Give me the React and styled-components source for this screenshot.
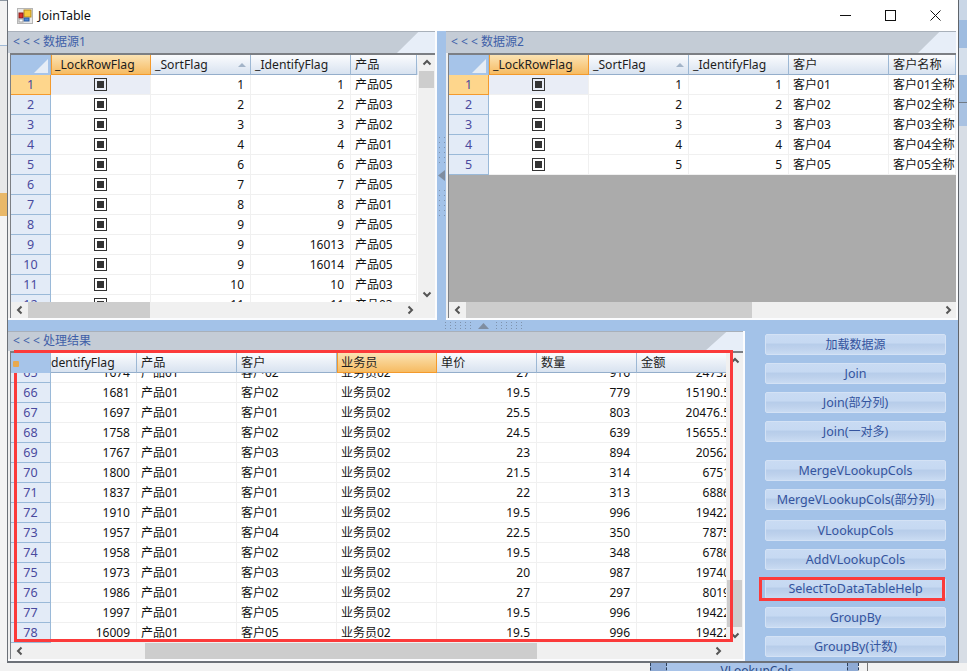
import React from 'react'
import styled, { createGlobalStyle, css } from 'styled-components'

const FONT = `"Noto Sans", "Noto Sans CJK SC", sans-serif`

const left = [
  [1, 1, '产品05'], [2, 2, '产品03'], [3, 3, '产品02'], [4, 4, '产品01'],
  [6, 6, '产品03'], [7, 7, '产品05'], [8, 8, '产品01'], [9, 9, '产品05'],
  [9, 16013, '产品05'], [9, 16014, '产品05'], [10, 10, '产品03'], [11, 11, '产品03'],
]

const right = [1, 2, 3, 4, 5]

const result = [
  [65, 1674, '客户02', 27, 916, '24732'],
  [66, 1681, '客户02', 19.5, 779, '15190.5'],
  [67, 1697, '客户01', 25.5, 803, '20476.5'],
  [68, 1758, '客户02', 24.5, 639, '15655.5'],
  [69, 1767, '客户03', 23, 894, '20562'],
  [70, 1800, '客户01', 21.5, 314, '6751'],
  [71, 1837, '客户01', 22, 313, '6886'],
  [72, 1910, '客户01', 19.5, 996, '19422'],
  [73, 1957, '客户04', 22.5, 350, '7875'],
  [74, 1958, '客户02', 19.5, 348, '6786'],
  [75, 1973, '客户03', 20, 987, '19740'],
  [76, 1986, '客户02', 27, 297, '8019'],
  [77, 1997, '客户05', 19.5, 996, '19422'],
  [78, 16009, '客户05', 19.5, 996, '19422'],
]

const GlobalStyle = createGlobalStyle`
  html, body { margin: 0; padding: 0; background: #f2f2f2; }
  * { box-sizing: border-box; }
`

const Page = styled.div`
  position: relative;
  width: 967px;
  height: 671px;
  overflow: hidden;
  font-family: ${FONT};
  font-size: 12px;
  display: flex;
  flex-direction: column;
`

const TopArea = styled.div`
  display: flex;
  height: 663px;
`

const LeftEdge = styled.div`
  width: 7px;
  background: linear-gradient(#8e98a3 0 1px, #f2f2f2 1px 45px, #9fb9d6 45px 46px, #e8e8e8 46px 193px, #e9b868 193px 216px, #f4f4f4 216px);
`

const RightEdge = styled.div`
  flex: 1;
  background: linear-gradient(#c9d6e6 0 20px, #9fbce0 20px 48px, #d5dfeb 48px 75px, #9fbce0 75px 102px, #6f7a86 102px 103px, #a9c2e2 103px 126px, #d7dde5 126px);
`

const BottomEdge = styled.div`
  flex: 1;
  display: flex;
  background: #f2f2f2;
  padding-left: 650px;
`

const DashCell = styled.div`
  width: ${p => p.$w}px;
  height: 100%;
  background: ${p => p.$bg};
  border-left: 1px dashed #2c3e58;
  overflow: hidden;
  font-size: 12px;
  color: #2a4a86;
  text-align: center;
  line-height: 16px;
`

const EdgeLine = styled.div`
  width: 10px;
  height: 100%;
  border-left: 1px dashed #2c3e58;
  border-right: 1px solid #777;
`

const Window = styled.div`
  width: 952px;
  display: flex;
  flex-direction: column;
  border-left: 1px solid #6c7178;
  border-right: 1px solid #5f646b;
  border-bottom: 2px solid #6c7178;
  background: #a3c2e8;
`

const TitleBar = styled.div`
  height: 31px;
  flex: none;
  background: #fff;
  display: flex;
  align-items: center;
  padding-left: 9px;
  color: #111;
  font-size: 12.5px;
`

const TitleText = styled.span`
  margin-left: 5px;
  flex: 1;
`

const CaptionButton = styled.div`
  width: 45px;
  height: 31px;
  display: flex;
  align-items: center;
  justify-content: center;
`

const TopRow = styled.div`
  display: flex;
  height: 289px;
  flex: none;
`

const BottomRow = styled.div`
  display: flex;
  flex: 1;
  min-height: 0;
`

const Panel = styled.div`
  width: ${p => p.$w}px;
  flex: none;
  display: flex;
  flex-direction: column;
  background: #f0f0f0;
  border-right: 2px solid #fbfcfe;
  border-bottom: 2px solid #fbfcfe;
`

const PanelHeader = styled.div`
  position: relative;
  height: ${p => p.$h}px;
  flex: none;
  background: #c4ccd6;
  border-top: 1px solid #a8b0ba;
  color: #3f5fa8;
  font-size: 12px;
  line-height: ${p => p.$h - 2}px;
  padding-left: 5px;
  &::after {
    content: '';
    position: absolute;
    right: 0;
    top: 0;
    bottom: 0;
    width: 38px;
    background: #e7eef8;
    clip-path: polygon(56% 0, 100% 0, 100% 100%, 0 100%);
  }
`

const VSplit = styled.div`
  width: 9px;
  flex: none;
  display: flex;
  flex-direction: column;
  align-items: center;
  justify-content: center;
  gap: 7px;
`

const HSplit = styled.div`
  height: 11px;
  flex: none;
  display: flex;
  align-items: center;
  justify-content: center;
  gap: 5px;
`

const Dots = styled.div`
  ${p => p.$vertical ? css`
    width: 10px;
    height: 28px;
    background-size: 5px 5px;
  ` : css`
    width: 30px;
    height: 9px;
    background-size: 5px 3px;
  `}
  background-image: radial-gradient(#7f93ad 0.8px, transparent 1px);
`

const GridFrame = styled.div`
  flex: 1;
  min-height: 0;
  margin-left: 2px;
  display: flex;
  flex-direction: column;
  border-top: 2px solid #7c7f84;
  border-left: 1px solid #7c7f84;
  background: #f0f0f0;
  position: relative;
`

const GridMain = styled.div`
  flex: 1;
  min-height: 0;
  display: flex;
`

const RowsPane = styled.div`
  flex: 1;
  min-width: 0;
  overflow: hidden;
  background: ${p => p.$empty ? '#ababab' : '#fff'};
  position: relative;
`

const Scroller = styled.div`
  margin-top: ${p => p.$offset || 0}px;
`

const Row = styled.div`
  display: flex;
  height: 20px;
  ${p => p.$head && css`
    position: relative;
    z-index: 1;
    background: linear-gradient(#fbfcfe, #d6e1ef);
  `}
`

const Corner = styled.div`
  position: relative;
  width: 40px;
  flex: none;
  background: #a6c4e9;
  border-right: 1px solid #9ab9d8;
  ${p => p.$triangle && css`
    &::after {
      content: '';
      position: absolute;
      right: 2px;
      bottom: 2px;
      width: 14px;
      height: 14px;
      background: #e6edf6;
      clip-path: polygon(100% 0, 100% 100%, 0 100%);
    }
  `}
`

const Marker = styled.div`
  position: absolute;
  left: 2px;
  top: 8px;
  width: 6px;
  height: 6px;
  background: #e9a94e;
  border-radius: 1px;
`

const HeadCell = styled.div`
  position: relative;
  flex: none;
  width: ${p => p.$w}px;
  padding-left: ${p => p.$cut ? 0 : 4}px;
  font-size: 12.2px;
  line-height: 19px;
  white-space: nowrap;
  overflow: hidden;
  color: #1d1d1d;
  border-right: 1px solid #9db8d4;
  border-bottom: 1px solid #94aecb;
  ${p => p.$active && css`
    background: linear-gradient(#fbe3b4, #f6bb62);
    border-bottom: 1px solid #f49a2c;
    border-right: 1px solid #f49a2c;
    box-shadow: inset 1px 0 #f49a2c;
  `}
`

const SortGlyph = styled.span`
  position: absolute;
  right: 4px;
  top: 8px;
  width: 0;
  height: 0;
  border-left: 4px solid transparent;
  border-right: 4px solid transparent;
  border-bottom: 4px solid #a3b4c8;
`

const RowHead = styled.div`
  width: 40px;
  flex: none;
  text-align: center;
  font-size: 12.5px;
  line-height: 19px;
  color: #4a4a9e;
  background: ${p => p.$active ? '#fed68c' : '#e3ebf7'};
  border-right: 1px solid ${p => p.$active ? '#f49a2c' : '#9ab9d8'};
  border-bottom: 1px solid ${p => p.$active ? '#f49a2c' : '#9ab9d8'};
`

const Cell = styled.div`
  flex: none;
  width: ${p => p.$w}px;
  padding: ${p => p.$align === 'right' ? '0 6px 0 4px' : '0 4px'};
  line-height: 19px;
  white-space: nowrap;
  overflow: hidden;
  color: #111;
  text-align: ${p => p.$align || 'left'};
  background: ${p => p.$current ? '#e9edf6' : '#fff'};
  border-right: 1px solid #f0f0f0;
  border-bottom: 1px solid #f0f0f0;
`

const CheckCell = styled(Cell)`
  display: flex;
  align-items: center;
  justify-content: center;
`

const Check = styled.span`
  width: 13px;
  height: 13px;
  border: 1.5px solid #333;
  padding: 2px;
  &::before {
    content: '';
    display: block;
    width: 100%;
    height: 100%;
    background: #333;
  }
`

const VBar = styled.div`
  width: 17px;
  flex: none;
  background: #f0f0f0;
  display: flex;
  flex-direction: column;
  align-items: center;
`

const VThumb = styled.div`
  width: 15px;
  flex: none;
  height: ${p => p.$h}px;
  background: #cdcdcd;
`

const Spacer = styled.div`
  flex: 1;
`

const HBar = styled.div`
  height: 16px;
  flex: none;
  background: #f0f0f0;
  display: flex;
  align-items: stretch;
`

const HThumb = styled.div`
  flex: none;
  width: ${p => p.$w}px;
  margin-left: ${p => p.$left || 0}px;
  background: #cdcdcd;
`

const ArrowBox = styled.div`
  flex: none;
  width: 17px;
  min-height: 16px;
  display: flex;
  align-items: center;
  justify-content: center;
`

const ButtonColumn = styled.div`
  flex: 1;
  display: flex;
  flex-direction: column;
  gap: 8px;
  padding: 3px 0 0 20px;
`

const ActionButton = styled.button`
  width: 181px;
  height: 21px;
  flex: none;
  margin-top: ${p => p.$above || 0}px;
  padding: 0;
  border: 1px solid #d4e2f5;
  border-radius: 2px;
  font-family: ${FONT};
  font-size: 12.5px;
  line-height: 17px;
  color: #34549e;
  background: linear-gradient(#c9dbf3 0, #c6d9f2 40%, #b7cdea 50%, #bdd1ec 70%, #c9dbf2 100%);
`

const Cjk = styled.span`
  font-size: 12px;
`

const RedBox = styled.div`
  position: absolute;
  left: ${p => p.$x}px;
  top: ${p => p.$y}px;
  width: ${p => p.$w}px;
  height: ${p => p.$h}px;
  border: 3px solid #fb3a3a;
  pointer-events: none;
`

const AppIcon = () => (
  <svg width="16" height="16" viewBox="0 0 16 16">
    <rect x="0.5" y="0.5" width="15" height="15" fill="#e8e8e8" stroke="#b5b5b5" />
    <rect x="7" y="2" width="7" height="7" fill="#f6c93a" stroke="#b58a1c" />
    <rect x="2" y="5" width="4" height="5" fill="#d9312b" stroke="#8a1a16" />
    <rect x="7" y="10" width="5" height="3" fill="#4a86d8" stroke="#2c5a9c" />
    <rect x="2" y="11" width="4" height="3" fill="#fff" stroke="#a0a0a0" />
  </svg>
)

const Chevron = ({ dir, size = 10 }) => {
  const points = {
    left: '6.5,1.5 3,5 6.5,8.5',
    right: '3.5,1.5 7,5 3.5,8.5',
    up: '1.5,6.5 5,3 8.5,6.5',
    down: '1.5,3.5 5,7 8.5,3.5',
  }
  return (
    <svg width={size} height={size} viewBox="0 0 10 10">
      <polyline points={points[dir]} fill="none" stroke="#555" strokeWidth="2" />
    </svg>
  )
}

const Triangle = ({ dir }) => (
  <svg width={dir === 'left' ? 7 : 11} height={dir === 'left' ? 11 : 6} viewBox={dir === 'left' ? '0 0 7 11' : '0 0 11 6'}>
    <polygon points={dir === 'left' ? '7,0 7,11 0,5.5' : '5.5,0 11,6 0,6'} fill="#7f8da0" />
  </svg>
)

const HScroll = ({ left: thumbLeft, width, rightGap }) => (
  <HBar>
    <ArrowBox><Chevron dir="left" /></ArrowBox>
    <HThumb $left={thumbLeft} $w={width} />
    <Spacer />
    <ArrowBox><Chevron dir="right" /></ArrowBox>
    {rightGap && <ArrowBox />}
  </HBar>
)

function App() {
  return (
    <Page>
      <GlobalStyle />
      <TopArea>
        <LeftEdge />
        <Window>
          <TitleBar>
            <AppIcon />
            <TitleText>JoinTable</TitleText>
            <CaptionButton>
              <svg width="11" height="11" viewBox="0 0 11 11"><path d="M0 5.5H11" stroke="#111" /></svg>
            </CaptionButton>
            <CaptionButton>
              <svg width="11" height="11" viewBox="0 0 11 11"><rect x="0.5" y="0.5" width="10" height="10" fill="none" stroke="#111" /></svg>
            </CaptionButton>
            <CaptionButton>
              <svg width="11" height="11" viewBox="0 0 11 11"><path d="M0.5 0.5L10.5 10.5M10.5 0.5L0.5 10.5" stroke="#111" /></svg>
            </CaptionButton>
          </TitleBar>

          <TopRow>
            <Panel $w={429}>
              <PanelHeader $h={22}>&lt; &lt; &lt; 数据源1</PanelHeader>
              <GridFrame>
                <GridMain>
                  <RowsPane>
                    <Row $head>
                      <Corner $triangle />
                      <HeadCell $w={100} $active>_LockRowFlag</HeadCell>
                      <HeadCell $w={100}>_SortFlag<SortGlyph /></HeadCell>
                      <HeadCell $w={100}>_IdentifyFlag</HeadCell>
                      <HeadCell $w={66}>产品</HeadCell>
                    </Row>
                    <Scroller>
                      {left.map((r, i) => (
                        <Row key={i}>
                          <RowHead $active={i === 0}>{i + 1}</RowHead>
                          <CheckCell $w={100} $current={i === 0}><Check /></CheckCell>
                          <Cell $w={100} $align="right">{r[0]}</Cell>
                          <Cell $w={100} $align="right">{r[1]}</Cell>
                          <Cell $w={66}>{r[2]}</Cell>
                        </Row>
                      ))}
                    </Scroller>
                  </RowsPane>
                  <VBar>
                    <ArrowBox><Chevron dir="up" /></ArrowBox>
                    <VThumb $h={17} />
                    <Spacer />
                    <ArrowBox><Chevron dir="down" /></ArrowBox>
                  </VBar>
                </GridMain>
                <HScroll width={122} rightGap />
              </GridFrame>
            </Panel>

            <VSplit>
              <Dots $vertical />
              <Triangle dir="left" />
              <Dots $vertical />
            </VSplit>

            <Panel $w={512}>
              <PanelHeader $h={22}>&lt; &lt; &lt; 数据源2</PanelHeader>
              <GridFrame>
                <GridMain>
                  <RowsPane $empty>
                    <Row $head>
                      <Corner $triangle />
                      <HeadCell $w={100} $active>_LockRowFlag</HeadCell>
                      <HeadCell $w={100}>_SortFlag<SortGlyph /></HeadCell>
                      <HeadCell $w={100}>_IdentifyFlag</HeadCell>
                      <HeadCell $w={100}>客户</HeadCell>
                      <HeadCell $w={67}>客户名称</HeadCell>
                    </Row>
                    {right.map((n, i) => (
                      <Row key={n}>
                        <RowHead $active={i === 0}>{n}</RowHead>
                        <CheckCell $w={100} $current={i === 0}><Check /></CheckCell>
                        <Cell $w={100} $align="right">{n}</Cell>
                        <Cell $w={100} $align="right">{n}</Cell>
                        <Cell $w={100}>客户0{n}</Cell>
                        <Cell $w={67}>客户0{n}全称</Cell>
                      </Row>
                    ))}
                  </RowsPane>
                </GridMain>
                <HScroll width={286} />
              </GridFrame>
            </Panel>
          </TopRow>

          <HSplit>
            <Dots />
            <Triangle dir="up" />
            <Dots />
          </HSplit>

          <BottomRow>
            <Panel $w={737}>
              <PanelHeader $h={20}>&lt; &lt; &lt; 处理结果</PanelHeader>
              <GridFrame>
                <GridMain>
                  <RowsPane>
                    <Row $head>
                      <Corner><Marker /></Corner>
                      <HeadCell $w={86} $cut>dentifyFlag</HeadCell>
                      <HeadCell $w={100}>产品</HeadCell>
                      <HeadCell $w={100}>客户</HeadCell>
                      <HeadCell $w={100} $active>业务员</HeadCell>
                      <HeadCell $w={100}>单价</HeadCell>
                      <HeadCell $w={100}>数量</HeadCell>
                      <HeadCell $w={100}>金额</HeadCell>
                    </Row>
                    <Scroller $offset={-10}>
                      {result.map(r => (
                        <Row key={r[0]}>
                          <RowHead>{r[0]}</RowHead>
                          <Cell $w={86} $align="right">{r[1]}</Cell>
                          <Cell $w={100}>产品01</Cell>
                          <Cell $w={100}>{r[2]}</Cell>
                          <Cell $w={100}>业务员02</Cell>
                          <Cell $w={100} $align="right">{r[3]}</Cell>
                          <Cell $w={100} $align="right">{r[4]}</Cell>
                          <Cell $w={100} $align="right">{r[5]}</Cell>
                        </Row>
                      ))}
                    </Scroller>
                  </RowsPane>
                  <VBar>
                    <ArrowBox><Chevron dir="up" /></ArrowBox>
                    <Spacer />
                    <VThumb $h={47} />
                    <ArrowBox><Chevron dir="down" /></ArrowBox>
                  </VBar>
                </GridMain>
                <HScroll left={117} width={392} rightGap />
              </GridFrame>
            </Panel>

            <ButtonColumn>
              <ActionButton><Cjk>加载数据源</Cjk></ActionButton>
              <ActionButton>Join</ActionButton>
              <ActionButton>Join(<Cjk>部分列</Cjk>)</ActionButton>
              <ActionButton>Join(<Cjk>一对多</Cjk>)</ActionButton>
              <ActionButton $above={10}>MergeVLookupCols</ActionButton>
              <ActionButton>MergeVLookupCols(<Cjk>部分列</Cjk>)</ActionButton>
              <ActionButton $above={2}>VLookupCols</ActionButton>
              <ActionButton>AddVLookupCols</ActionButton>
              <ActionButton>SelectToDataTableHelp</ActionButton>
              <ActionButton>GroupBy</ActionButton>
              <ActionButton>GroupBy(<Cjk>计数</Cjk>)</ActionButton>
            </ButtonColumn>
          </BottomRow>
        </Window>
        <RightEdge />
      </TopArea>
      <BottomEdge>
        <DashCell $w={16} $bg="#8eaad4" />
        <DashCell $w={181} $bg="#a9c4e9">VLookupCols</DashCell>
        <DashCell $w={11} $bg="#8eaad4" />
        <EdgeLine />
      </BottomEdge>
      <RedBox $x={14} $y={350} $w={719} $h={292} />
      <RedBox $x={759} $y={577} $w={186} $h={24} />
    </Page>
  )
}

export default App
